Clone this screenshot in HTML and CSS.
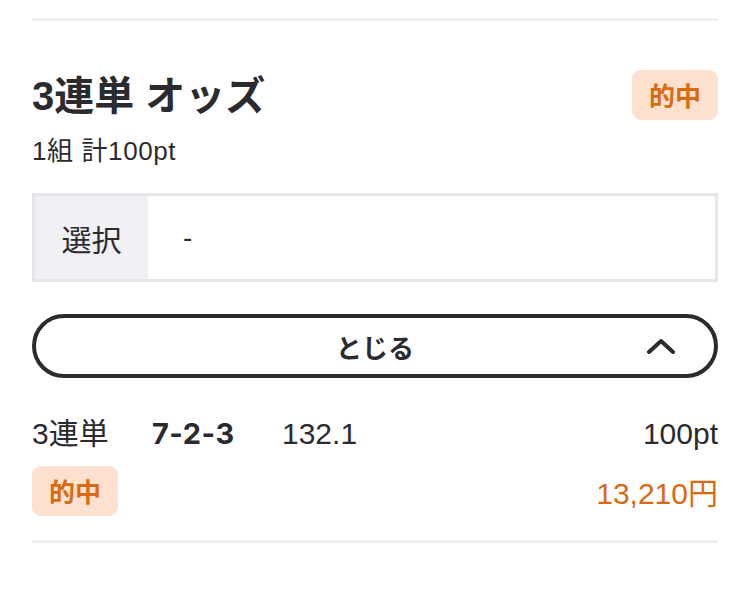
FILE: index.html
```html
<!DOCTYPE html>
<html lang="ja">
<head>
<meta charset="utf-8">
<link rel="stylesheet" href="styles.css">
</head>
<body>
<div class="page">
  <div class="divider top"></div>
  <div class="header">
    <div class="heading">
      <h1 class="title">3連単 オッズ</h1>
      <p class="sub">1組 計100pt</p>
    </div>
    <span class="badge">的中</span>
  </div>
  <div class="select-table">
    <div class="select-label">選択</div>
    <div class="select-value">-</div>
  </div>
  <button class="toggle" type="button">
    <span class="toggle-text">とじる</span>
    <svg class="chev" width="30" height="16" viewBox="0 0 30 16"><path d="M3 14 L15 3 L27 14" fill="none" stroke="#2b2b2f" stroke-width="4" stroke-linecap="round" stroke-linejoin="round"/></svg>
  </button>
  <div class="bet-row">
    <span class="bet-type">3連単</span>
    <span class="bet-combo">7-2-3</span>
    <span class="bet-odds">132.1</span>
    <span class="bet-amount">100pt</span>
  </div>
  <div class="result-row">
    <span class="badge">的中</span>
    <span class="payout">13,210円</span>
  </div>
  <div class="divider bottom"></div>
</div>
</body>
</html>
```
FILE: styles.css
```css
* { box-sizing: border-box; }
html, body { margin: 0; padding: 0; background: #fff; }
body {
  font-family: "Liberation Sans", "Noto Sans CJK JP", sans-serif;
  color: #2b2b2f;
}
.page {
  width: 749px;
  padding: 18px 31px 0 32px;
}
.divider {
  height: 3px;
  background: #efeff2;
}
.header {
  display: flex;
  justify-content: space-between;
  align-items: flex-start;
  margin-top: 47px;
}
.title {
  margin: 0;
  font-size: 40px;
  line-height: 56px;
  font-weight: 700;
}
.sub {
  margin: 9px 0 0;
  font-size: 26px;
  line-height: 36px;
  letter-spacing: 0.6px;
}
.badge {
  display: inline-block;
  height: 50px;
  line-height: 50px;
  padding: 0 17px;
  border-radius: 9px;
  background: #fde0cd;
  color: #d86a10;
  font-size: 26px;
  font-weight: 700;
  font-family: "Noto Sans CJK JP", sans-serif;
}
.header .badge { margin-top: 2px; }
.select-table {
  display: flex;
  margin-top: 24px;
  height: 89px;
  border: 3px solid #e5e5ea;
}
.select-label {
  width: 113px;
  background: #f0f0f5;
  display: flex;
  align-items: center;
  justify-content: center;
  font-size: 30px;
}
.select-value {
  display: flex;
  align-items: center;
  padding-left: 35px;
  font-size: 28px;
}
.toggle {
  position: relative;
  display: flex;
  align-items: center;
  justify-content: center;
  width: 100%;
  height: 64px;
  margin-top: 32px;
  border: 4px solid #2b2b2f;
  border-radius: 32px;
  background: #fff;
  font-family: inherit;
  color: #2b2b2f;
  padding: 0;
}
.toggle-text {
  font-size: 26px;
  font-weight: 700;
  font-family: "Noto Sans CJK JP", sans-serif;
}
.chev {
  position: absolute;
  right: 38px;
  top: 20px;
}
.bet-row {
  display: grid;
  grid-template-columns: 120px 130px 1fr auto;
  align-items: center;
  margin-top: 36px;
  height: 40px;
  font-size: 30px;
  line-height: 40px;
}
.bet-combo {
  font-family: "Inter", "Liberation Sans", sans-serif;
  font-weight: 700;
  font-size: 29px;
  letter-spacing: 0.5px;
}
.bet-amount { text-align: right; }
.result-row {
  display: flex;
  justify-content: space-between;
  align-items: center;
  margin-top: 12px;
}
.payout {
  color: #d86a10;
  font-size: 30px;
}
.divider.bottom { margin-top: 24px; }
```
